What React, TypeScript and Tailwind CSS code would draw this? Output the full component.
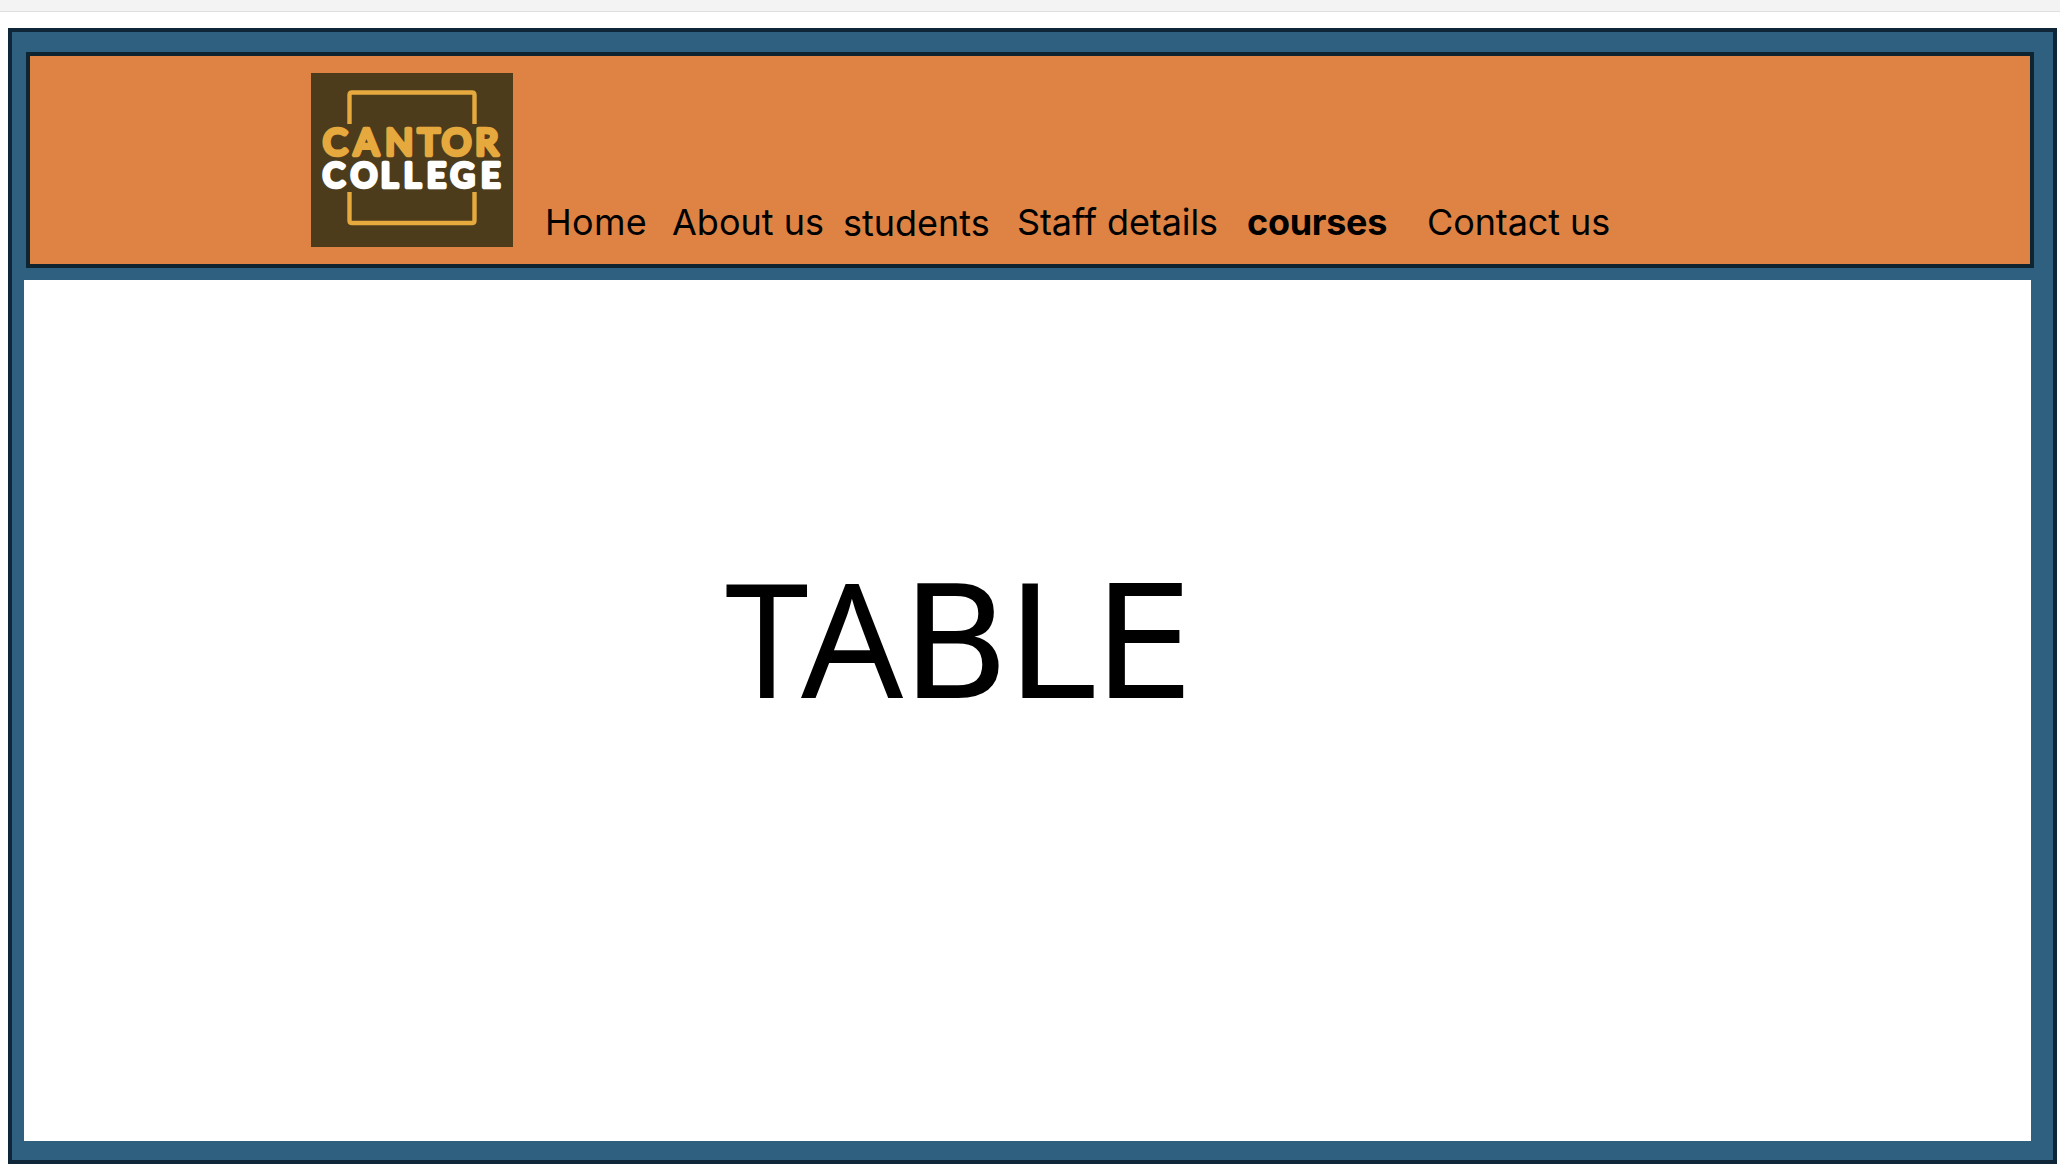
const navItems = [
  { label: "Home", style: "w-[127px] tracking-[0.3px]" },
  { label: "About us", style: "w-[171px]" },
  { label: "students", style: "w-[174px] pt-px" },
  { label: "Staff details", style: "w-[230px] tracking-[-0.1px]" },
  { label: "courses", style: "w-[180px] font-bold tracking-[-0.3px]" },
  { label: "Contact us", style: "w-[200px] tracking-[-0.1px]" },
];

function Logo() {
  return (
    <svg
      viewBox="0 0 202 174"
      className="h-[174px] w-[202px] shrink-0 bg-[#4c3c1c]"
      role="img"
      aria-label="Cantor College"
    >
      <g fill="none" stroke="#e6a93e" strokeWidth="4.4">
        <path d="M38.5 51V22q0-2.5 2.5-2.5H161q2.5 0 2.5 2.5V51" />
        <path d="M38.5 119v28.5q0 2.5 2.5 2.5H161q2.5 0 2.5-2.5V119" />
      </g>
      <g fontFamily="Lato, sans-serif" fontWeight="400" strokeLinejoin="round" strokeWidth="4.6">
        <text x="12 43 74.3 107 131 164.3" y="81.5" fontSize="36.5" fill="#e6a93e" stroke="#e6a93e">
          CANTOR
        </text>
        <text x="12.1 40.1 69.9 92.9 115.9 139.8 170.3" y="114.3" fontSize="32.5" fill="#fff" stroke="#fff">
          COLLEGE
        </text>
      </g>
    </svg>
  );
}

export default function App() {
  return (
    <div className="flex h-[1170px] w-[2060px] flex-col overflow-hidden bg-white text-black">
      <div className="h-3 shrink-0 border-b border-[#dfdfdf] bg-[#f3f3f3]" />
      <div className="ml-2 mt-4 flex h-[1136px] w-[2049px] shrink-0 flex-col border-4 border-[#0e2638] bg-[#2f6080]">
        <header className="ml-3.5 mt-5 flex h-[216px] w-[2008px] shrink-0 border-4 border-[#0e2430] bg-[#de8344] pl-[281px] pt-[17px]">
          <Logo />
          <nav className="ml-8 mt-[129px] flex font-[Inter,sans-serif] text-[36px] leading-[40px]">
            {navItems.map((item) => (
              <a key={item.label} className={`shrink-0 whitespace-nowrap ${item.style}`}>
                {item.label}
              </a>
            ))}
          </nav>
        </header>
        <main className="ml-3 mt-3 h-[861px] w-[2007px] shrink-0 bg-white pl-[701px] pt-[266px]">
          <h1 className="flex items-baseline whitespace-nowrap font-['DejaVu_Sans',sans-serif] text-[157px] leading-[180px]">
            <span className="w-[76px] origin-left scale-x-[0.94] font-['Noto_Sans',sans-serif] text-[160px]">T</span>
            <span className="w-[101px] font-['Noto_Sans',sans-serif] text-[160px]">A</span>
            <span className="w-[105px]">B</span>
            <span className="w-[87px]">L</span>
            <span>E</span>
          </h1>
        </main>
      </div>
    </div>
  );
}
